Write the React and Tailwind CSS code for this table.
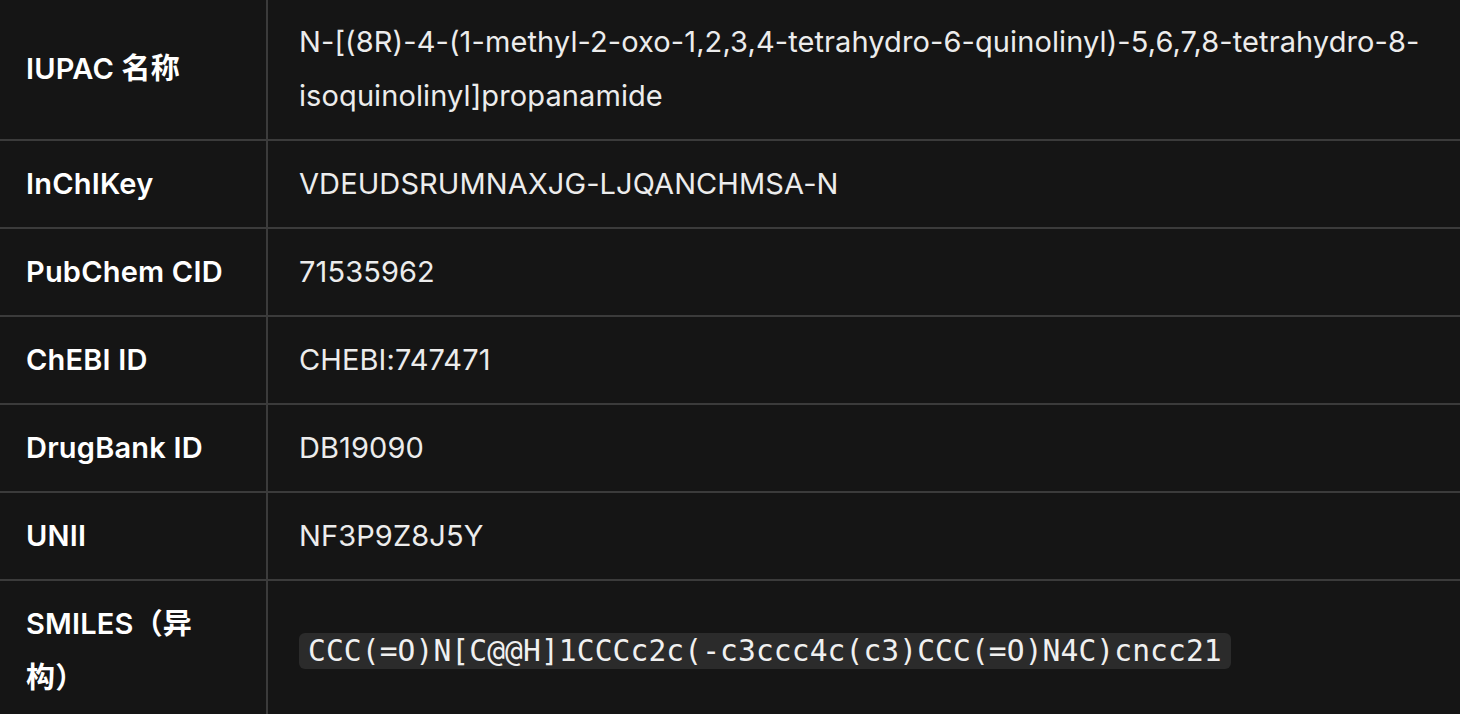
import React from 'react';

const rows = [
  {
    label: 'IUPAC 名称',
    value: 'N-[(8R)-4-(1-methyl-2-oxo-1,2,3,4-tetrahydro-6-quinolinyl)-5,6,7,8-tetrahydro-8-isoquinolinyl]propanamide',
  },
  { label: 'InChIKey', value: 'VDEUDSRUMNAXJG-LJQANCHMSA-N' },
  { label: 'PubChem CID', value: '71535962' },
  { label: 'ChEBI ID', value: 'CHEBI:747471' },
  { label: 'DrugBank ID', value: 'DB19090' },
  { label: 'UNII', value: 'NF3P9Z8J5Y' },
  {
    label: 'SMILES（异构）',
    code: 'CCC(=O)N[C@@H]1CCCc2c(-c3ccc4c(c3)CCC(=O)N4C)cncc21',
  },
];

const App = () => {
  return (
    <div
      className="w-[1460px] h-[714px] overflow-hidden bg-[#151515] text-[#f2f2f2]"
      style={{ fontFamily: 'Inter, "Noto Sans CJK SC", sans-serif' }}
    >
      <table className="w-full table-fixed border-collapse -mt-[1px]">
        <colgroup>
          <col className="w-[267px]" />
          <col />
        </colgroup>
        <tbody>
          {rows.map((row, i) => (
            <tr key={i} className="border-b-2 border-[#3b3b3b]">
              <td className="pl-[26px] pr-[40px] py-[16px] align-middle border-r-2 border-[#3b3b3b] text-[29px] leading-[54px] tracking-[0.2px] font-semibold text-white">
                {row.label}
              </td>
              <td className="pl-[31px] pr-[26px] py-[16px] align-middle text-[29px] leading-[54px] tracking-[0.1px] text-[#ececec] break-words">
                {row.code ? (
                  <code
                    className="bg-[#2b2b2b] rounded-[6px] px-[9px] py-[1px] text-[29.6px] text-[#f0f0f0]"
                    style={{ fontFamily: '"DejaVu Sans Mono", monospace' }}
                  >
                    {row.code}
                  </code>
                ) : (
                  row.value
                )}
              </td>
            </tr>
          ))}
        </tbody>
      </table>
    </div>
  );
};

export default App;
